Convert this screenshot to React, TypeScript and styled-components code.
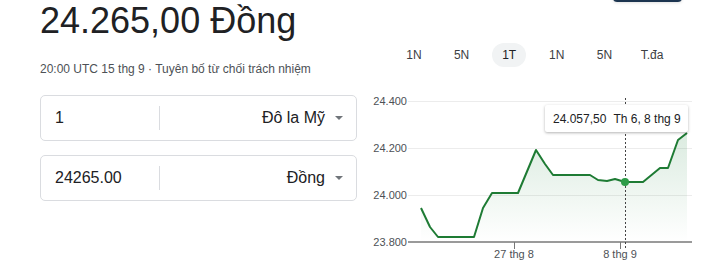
import React, { FC } from "react";
import styled, { createGlobalStyle } from "styled-components";

const GlobalStyle = createGlobalStyle`
  body {
    margin: 0;
    background: #fff;
    font-family: "Liberation Sans", Arial, sans-serif;
  }
`;

const ranges = ["1N", "5N", "1T", "1N", "5N", "T.đa"];

// line points in page coordinates
const points: [number, number][] = [
  [421, 208], [430, 227], [438, 237], [474, 237], [483, 208], [492, 193],
  [518, 193], [536, 150], [545, 164], [553, 175], [590, 175], [598, 180],
  [607, 181], [615, 179], [625, 182], [643, 182], [660, 168], [668, 168],
  [678, 140], [687, 133],
];

const yTicks = [
  { label: "24.400", y: 101 },
  { label: "24.200", y: 148 },
  { label: "24.000", y: 195 },
];

type FieldProps = {
  value: string;
  unit: string;
};

const Field: FC<FieldProps> = (props) => {
  return (
    <Box>
      <Amount>{props.value}</Amount>
      <Divider />
      <Unit>
        {props.unit}
        <Caret />
      </Unit>
    </Box>
  );
};

const Chart: FC = () => {
  const line = points.map((p) => p.join(",")).join(" ");
  const area =
    `M${points[0][0]},242 ` +
    points.map((p) => `L${p[0]},${p[1]}`).join(" ") +
    ` L${points[points.length - 1][0]},242 Z`;
  return (
    <ChartWrap>
      <svg width="339" height="180" viewBox="370 85 339 180">
        <defs>
          <linearGradient id="fill" x1="0" y1="130" x2="0" y2="242" gradientUnits="userSpaceOnUse">
            <stop offset="0" stopColor="#188038" stopOpacity="0.16" />
            <stop offset="1" stopColor="#188038" stopOpacity="0" />
          </linearGradient>
        </defs>
        {yTicks.map((t) => (
          <g key={t.label}>
            <line x1="408" x2="692" y1={t.y + 0.5} y2={t.y + 0.5} stroke="#ececec" />
            <text x="407" y={t.y + 4} textAnchor="end" className="axis">
              {t.label}
            </text>
          </g>
        ))}
        <text x="407" y="246" textAnchor="end" className="axis">
          23.800
        </text>
        <path d={area} fill="url(#fill)" />
        <polyline points={line} fill="none" stroke="#1e7b34" strokeWidth="2" strokeLinejoin="round" />
        <line x1="408" x2="692" y1="242" y2="242" stroke="#9a9a9a" strokeWidth="2" />
        <line x1="514.5" x2="514.5" y1="242" y2="249" stroke="#777" />
        <line x1="620.5" x2="620.5" y1="242" y2="249" stroke="#777" />
        <text x="514" y="258" textAnchor="middle" className="axis">
          27 thg 8
        </text>
        <text x="620" y="258" textAnchor="middle" className="axis">
          8 thg 9
        </text>
        <line x1="625.5" x2="625.5" y1="98" y2="250" stroke="#444" strokeDasharray="2,2" />
        <circle cx="625" cy="182" r="4" fill="#2e9c48" />
      </svg>
      <Tooltip>
        <span>24.057,50</span>
        <span>Th 6, 8 thg 9</span>
      </Tooltip>
    </ChartWrap>
  );
};

const App: FC = () => {
  return (
    <Page>
      <GlobalStyle />
      <Left>
        <Title>24.265,00 Đồng</Title>
        <Meta>20:00 UTC 15 thg 9 · Tuyên bố từ chối trách nhiệm</Meta>
        <Fields>
          <Field value="1" unit="Đô la Mỹ" />
          <Field value="24265.00" unit="Đồng" />
        </Fields>
      </Left>
      <Right>
        <TopButton />
        <Tabs>
          {ranges.map((r, i) => (
            <Tab key={i} active={i == 2}>
              {r}
            </Tab>
          ))}
        </Tabs>
        <Chart />
      </Right>
    </Page>
  );
};

const Page = styled.div`
  display: flex;
  padding-left: 40px;
  width: 709px;
  height: 280px;
  box-sizing: border-box;
  overflow: hidden;
`;

const Left = styled.div`
  width: 317px;
  display: flex;
  flex-direction: column;
`;

const Title = styled.div`
  font-size: 36px;
  line-height: 42px;
  color: #202124;
`;

const Meta = styled.div`
  margin-top: 19px;
  font-size: 12px;
  line-height: 16px;
  color: #4d5156;
`;

const Fields = styled.div`
  margin-top: 18px;
  display: flex;
  flex-direction: column;
  gap: 14px;
`;

const Box = styled.div`
  height: 46px;
  box-sizing: border-box;
  border: 1px solid #dadce0;
  border-radius: 5px;
  display: flex;
  align-items: center;
  font-size: 16px;
  color: #202124;
`;

const Amount = styled.div`
  width: 104px;
  padding-left: 14px;
`;

const Divider = styled.div`
  width: 1px;
  height: 24px;
  background: #dadce0;
`;

const Unit = styled.div`
  flex: 1;
  display: flex;
  align-items: center;
  justify-content: flex-end;
  padding-right: 13px;
`;

const Caret = styled.span`
  margin-left: 10px;
  width: 0;
  height: 0;
  border-left: 4px solid transparent;
  border-right: 4px solid transparent;
  border-top: 4px solid #70757a;
`;

const Right = styled.div`
  margin-left: 13px;
  width: 339px;
  display: flex;
  flex-direction: column;
`;

const TopButton = styled.div`
  align-self: flex-end;
  margin-right: 27px;
  margin-top: -34px;
  width: 69px;
  height: 36px;
  border-radius: 4px;
  background: #1c3550;
  box-shadow: 0 1px 3px rgba(0, 0, 0, 0.12);
`;

const Tabs = styled.div`
  margin-top: 41px;
  margin-left: 27px;
  display: grid;
  grid-template-columns: repeat(6, 34px);
  column-gap: 13.6px;
`;

const Tab = styled.div<{ active?: boolean }>`
  height: 24px;
  border-radius: 12px;
  display: flex;
  align-items: center;
  justify-content: center;
  font-size: 12px;
  color: ${(p) => (p.active ? "#202124" : "#3c4043")};
  background: ${(p) => (p.active ? "#f1f3f4" : "transparent")};
`;

const ChartWrap = styled.div`
  position: relative;
  margin-top: 18px;
  height: 180px;

  svg {
    display: block;
  }
  .axis {
    font-family: "Liberation Sans", Arial, sans-serif;
    font-size: 11px;
    fill: #4d5156;
  }
`;

const Tooltip = styled.div`
  position: absolute;
  left: 175px;
  top: 20px;
  width: 143px;
  height: 27px;
  box-sizing: border-box;
  padding-left: 8px;
  display: flex;
  align-items: center;
  gap: 7px;
  background: #fff;
  border-radius: 2px;
  box-shadow: 0 1px 3px rgba(0, 0, 0, 0.3);
  font-size: 12px;
  color: #202124;
  white-space: nowrap;
`;

export default App;
